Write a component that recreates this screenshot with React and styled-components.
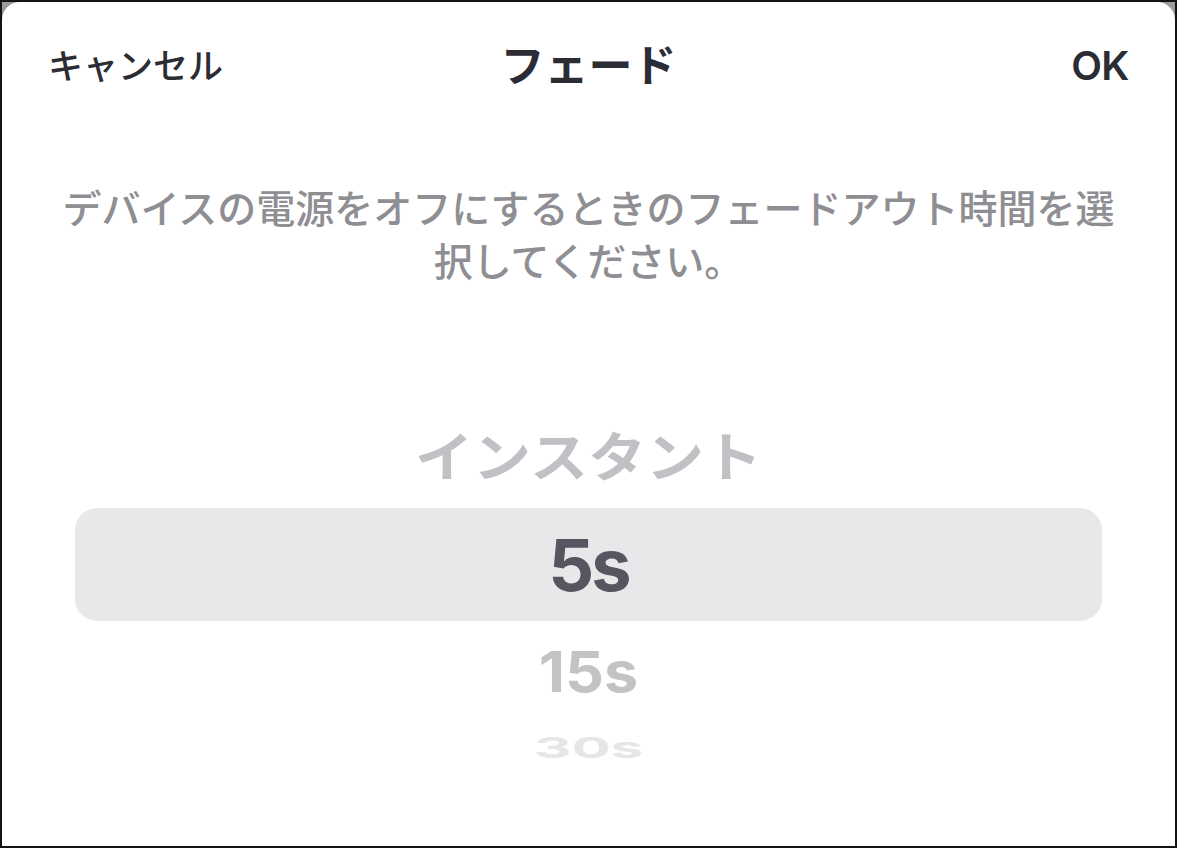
import React from "react";
import styled, { createGlobalStyle } from "styled-components";

const GlobalStyle = createGlobalStyle`
  html, body, #root {
    margin: 0;
    padding: 0;
    height: 100%;
    background: #ffffff;
  }
  * { box-sizing: border-box; }
  body {
    font-family: "Inter", "Noto Sans CJK JP", sans-serif;
  }
`;

const options = [
  { label: "インスタント", size: 58, color: "#c1c1c5", scale: 0.92, height: 100, spacing: 0 },
  { label: "5s", size: 72, color: "#55565f", scale: 1, height: 113, spacing: -3, selected: true },
  { label: "15s", size: 61, color: "#c3c3c6", scale: 0.93, height: 102, spacing: 0 },
  { label: "30s", size: 58, color: "#e6e6e8", scale: 0.5, height: 48, spacing: 0 },
];

const App = () => {
  return (
    <>
      <GlobalStyle />
      <Frame>
        <Sheet>
          <Header>
            <HeaderButton>キャンセル</HeaderButton>
            <Title>フェード</Title>
            <HeaderButton $latin>OK</HeaderButton>
          </Header>

          <Description>
            デバイスの電源をオフにするときのフェードアウト時間を選択してください。
          </Description>

          <Wheel>
            {options.map((o) => (
              <WheelRow key={o.label} $selected={o.selected} $height={o.height}>
                <WheelLabel
                  $size={o.size}
                  $color={o.color}
                  $scale={o.scale}
                  $spacing={o.spacing}
                >
                  {o.label}
                </WheelLabel>
              </WheelRow>
            ))}
          </Wheel>
        </Sheet>
      </Frame>
    </>
  );
};

const Frame = styled.div`
  width: 1177px;
  height: 848px;
  border: 2px solid #141414;
  background: #9b9b9b;
  overflow: hidden;
`;

const Sheet = styled.div`
  height: 100%;
  background: #ffffff;
  border-radius: 18px 18px 0 0;
  display: flex;
  flex-direction: column;
`;

const Header = styled.div`
  display: flex;
  align-items: center;
  justify-content: space-between;
  height: 64px;
  margin-top: 32px;
  padding: 0 46px 0 46px;
`;

const HeaderButton = styled.div`
  font-size: ${({ $latin }) => ($latin ? "40px" : "35px")};
  font-weight: ${({ $latin }) => ($latin ? 600 : 500)};
  color: #2b2c34;
  letter-spacing: ${({ $latin }) => ($latin ? "-0.5px" : "0")};
  width: 180px;
  text-align: ${({ $latin }) => ($latin ? "right" : "left")};
  line-height: 1;
`;

const Title = styled.div`
  font-size: 44px;
  font-weight: 700;
  color: #2b2c34;
  line-height: 1;
`;

const Description = styled.div`
  margin-top: 84px;
  padding: 0 50px;
  font-size: 39px;
  font-weight: 500;
  line-height: 53px;
  color: #8e8e93;
  text-align: center;
`;

const Wheel = styled.div`
  margin-top: 120px;
  display: flex;
  flex-direction: column;
`;

const WheelRow = styled.div`
  height: ${({ $height }) => $height}px;
  margin: 0 73px;
  display: flex;
  align-items: center;
  justify-content: center;
  border-radius: 22px;
  background: ${({ $selected }) => ($selected ? "#e8e8ea" : "transparent")};
`;

const WheelLabel = styled.span`
  font-size: ${({ $size }) => $size}px;
  font-weight: 700;
  color: ${({ $color }) => $color};
  transform: scaleY(${({ $scale }) => $scale});
  line-height: 1;
  letter-spacing: ${({ $spacing }) => $spacing}px;
`;

export default App;
